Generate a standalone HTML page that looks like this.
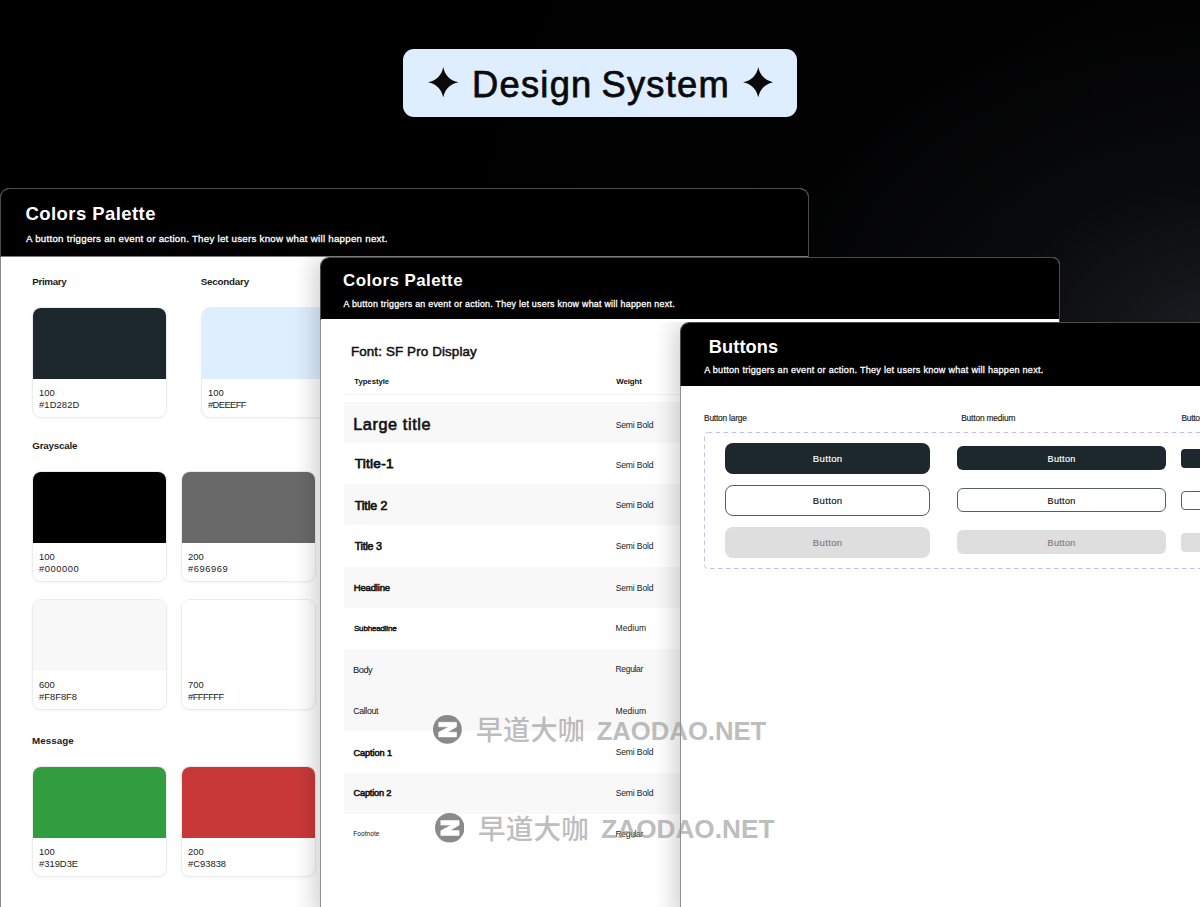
<!DOCTYPE html>
<html lang="en">
<head>
<meta charset="utf-8">
<title>Design System</title>
<style>
*{box-sizing:border-box;margin:0;padding:0}
html,body{width:1200px;height:907px;overflow:hidden}
body{position:relative;background:#000;font-family:"Liberation Sans","Noto Sans CJK SC",sans-serif;color:#111}
.bg{position:absolute;left:0;top:0;width:1200px;height:907px;background:
 radial-gradient(ellipse 480px 330px at 1230px 345px, rgba(27,31,35,1), rgba(12,14,17,.6) 50%, rgba(3,3,4,0) 100%),
 radial-gradient(ellipse 800px 700px at 1250px 300px, rgba(5,5,6,1), rgba(0,0,0,0) 100%),#000}
.abs{position:absolute}
.badge{position:absolute;left:403px;top:49px;width:394px;height:67.5px;border-radius:11px;background:#deeeff}
.badge .t{position:absolute;left:1px;width:100%;top:13.6px;text-align:center;font-size:36.3px;line-height:44px;color:#0a0a0a;letter-spacing:1.25px;word-spacing:-2.4px;-webkit-text-stroke:.75px #0a0a0a}
.badge svg{position:absolute;top:17.7px;width:30.5px;height:30.5px}
.panel{position:absolute;background:#fff;border:1px solid #4a4a4a;border-bottom:none;overflow:hidden}
.hd{position:absolute;left:0;top:0;right:0;background:#000;color:#fff}
#p1{left:0;top:188px;width:809px;height:730px;border-radius:9px 9px 0 0}
#p1 .hd{height:67px;box-shadow:0 1px 0 #7a7a7a}
#p2{left:320px;top:257px;width:740px;height:660px;border-radius:9px 7px 0 0;box-shadow:-6px 0 22px rgba(0,0,0,.18);clip-path:inset(0 0 0 -40px)}
#p2 .hd{height:61px}
#p3{left:680px;top:322px;width:540px;height:600px;border-radius:9px 0 0 0;box-shadow:-6px 0 22px rgba(0,0,0,.18);clip-path:inset(0 0 0 -40px)}
#p3 .hd{height:63px}
.t{position:absolute;white-space:nowrap;line-height:20px;z-index:2}
.sw{position:absolute;width:135px;height:111px;border-radius:9px;background:#fff;border:1px solid #ececec;box-shadow:0 1px 3px rgba(0,0,0,.045);overflow:hidden}
.sw i{position:absolute;left:-1px;top:-1px;width:135px;height:72px;display:block}
.sw u{text-decoration:none}
.sw b{position:absolute;left:6px;top:79px;font-weight:normal;font-size:9.4px;line-height:12.4px;color:#222;white-space:nowrap}
.row{position:absolute;left:23px;width:337px;height:41px}
.row.g{background:#f8f8f8}
.btn{position:absolute;font-size:9.2px;text-align:center;white-space:nowrap}
</style>
</head>
<body>
<div class="bg"></div>

<div class="badge">
  <svg style="left:25px" viewBox="0 0 32 32"><path d="M16 0 C17.6 8.6 23.4 14.4 32 16 C23.4 17.6 17.6 23.4 16 32 C14.4 23.4 8.6 17.6 0 16 C8.6 14.4 14.4 8.6 16 0Z" fill="#0a0a0a"/></svg>
  <div class="t">Design System</div>
  <svg style="left:339.5px" viewBox="0 0 32 32"><path d="M16 0 C17.6 8.6 23.4 14.4 32 16 C23.4 17.6 17.6 23.4 16 32 C14.4 23.4 8.6 17.6 0 16 C8.6 14.4 14.4 8.6 16 0Z" fill="#0a0a0a"/></svg>
</div>

<!-- PANEL 1 -->
<div class="panel" id="p1">
  <div class="hd"></div>
  <span class="t" style="left:24.55px;top:15.00px;font-size:18.5px;letter-spacing:0.423px;color:#fff;font-weight:bold;">Colors Palette</span>
  <span class="t" style="left:25.00px;top:39.50px;font-size:9.7px;letter-spacing:0.275px;color:#fff;-webkit-text-stroke:0.3px #fff;">A button triggers an event or action. They let users know what will happen next.</span>
  <span class="t" style="left:31.25px;top:82.50px;font-size:9.8px;letter-spacing:-0.342px;color:#1a1a1a;font-weight:bold;">Primary</span>
  <span class="t" style="left:199.75px;top:82.50px;font-size:9.8px;letter-spacing:-0.219px;color:#1a1a1a;font-weight:bold;">Secondary</span>
  <span class="t" style="left:31.30px;top:246.70px;font-size:9.8px;letter-spacing:-0.225px;color:#1a1a1a;font-weight:bold;">Grayscale</span>
  <span class="t" style="left:31.05px;top:541.70px;font-size:9.8px;letter-spacing:0.042px;color:#1a1a1a;font-weight:bold;">Message</span>
  <div class="sw" style="left:31px;top:118px"><i style="background:#1d282d"></i><b>100<br><u style="letter-spacing:0.1px">#1D282D</u></b></div>
  <div class="sw" style="left:200px;top:118px"><i style="background:#deeeff"></i><b>100<br><u style="letter-spacing:-0.6px">#DEEEFF</u></b></div>
  <div class="sw" style="left:31px;top:282px"><i style="background:#000"></i><b>100<br><u style="letter-spacing:0.55px">#000000</u></b></div>
  <div class="sw" style="left:180px;top:282px"><i style="background:#696969"></i><b>200<br><u style="letter-spacing:0.55px">#696969</u></b></div>
  <div class="sw" style="left:31px;top:410px"><i style="background:#f8f8f8"></i><b>600<br>#F8F8F8</b></div>
  <div class="sw" style="left:180px;top:410px"><i style="background:#fff"></i><b>700<br><u style="letter-spacing:-0.55px">#FFFFFF</u></b></div>
  <div class="sw" style="left:31px;top:577px"><i style="background:#319d3e"></i><b>100<br>#319D3E</b></div>
  <div class="sw" style="left:180px;top:577px"><i style="background:#c93838"></i><b>200<br>#C93838</b></div>
</div>

<div class="abs" style="left:0;top:257px;width:1px;height:650px;background:#8a8a8a"></div>

<!-- PANEL 2 -->
<div class="panel" id="p2">
  <div class="hd"></div>
  <div class="abs" style="left:23px;top:136px;width:337px;height:1px;background:#f3f3f3"></div>
  <div class="row g" style="top:144px;height:41px"></div>
  <div class="row g" style="top:226px;height:41px"></div>
  <div class="row g" style="top:309px;height:41px"></div>
  <div class="row g" style="top:391px;height:82px"></div>
  <div class="row g" style="top:515px;height:41px"></div>
  <span class="t" style="left:22.05px;top:12.70px;font-size:16.9px;letter-spacing:0.458px;color:#fff;font-weight:bold;">Colors Palette</span>
  <span class="t" style="left:22.50px;top:35.80px;font-size:8.9px;letter-spacing:0.253px;color:#fff;-webkit-text-stroke:0.28px #fff;">A button triggers an event or action. They let users know what will happen next.</span>
  <span class="t" style="left:29.95px;top:84.20px;font-size:13.4px;letter-spacing:0.121px;color:#111;-webkit-text-stroke:0.5px #111;">Font: SF Pro Display</span>
  <span class="t" style="left:33.30px;top:114.20px;font-size:7.7px;letter-spacing:-0.006px;color:#111;font-weight:bold;">Typestyle</span>
  <span class="t" style="left:295.20px;top:114.40px;font-size:7.9px;letter-spacing:-0.080px;color:#111;font-weight:bold;">Weight</span>
  <span class="t" style="left:32.20px;top:155.70px;font-size:16.3px;letter-spacing:0.580px;color:#111;-webkit-text-stroke:0.6px #111;">Large title</span>
  <span class="t" style="left:33.70px;top:196.10px;font-size:13.6px;letter-spacing:0.267px;color:#111;-webkit-text-stroke:0.75px #111;">Title-1</span>
  <span class="t" style="left:33.70px;top:237.70px;font-size:12.4px;letter-spacing:-0.117px;color:#111;-webkit-text-stroke:0.7px #111;">Title 2</span>
  <span class="t" style="left:33.70px;top:277.70px;font-size:10.7px;letter-spacing:-0.250px;color:#111;-webkit-text-stroke:0.62px #111;">Title 3</span>
  <span class="t" style="left:32.70px;top:319.70px;font-size:9.6px;letter-spacing:-0.207px;color:#111;-webkit-text-stroke:0.55px #111;">Headline</span>
  <span class="t" style="left:32.95px;top:360.70px;font-size:8.1px;letter-spacing:-0.225px;color:#111;-webkit-text-stroke:0.42px #111;">Subheadline</span>
  <span class="t" style="left:32.05px;top:402.00px;font-size:9.3px;letter-spacing:-0.500px;color:#111;">Body</span>
  <span class="t" style="left:32.30px;top:443.20px;font-size:8.8px;letter-spacing:-0.375px;color:#111;">Callout</span>
  <span class="t" style="left:32.55px;top:484.50px;font-size:9.2px;letter-spacing:-0.100px;color:#111;-webkit-text-stroke:0.55px #111;">Caption 1</span>
  <span class="t" style="left:32.55px;top:525.20px;font-size:9.2px;letter-spacing:-0.200px;color:#111;-webkit-text-stroke:0.55px #111;">Caption 2</span>
  <span class="t" style="left:32.30px;top:566.20px;font-size:6.5px;letter-spacing:0.057px;color:#111;">Footnote</span>
  <span class="t" style="left:294.70px;top:156.60px;font-size:8.6px;letter-spacing:-0.163px;color:#222;">Semi Bold</span>
  <span class="t" style="left:294.70px;top:196.50px;font-size:8.6px;letter-spacing:-0.163px;color:#222;">Semi Bold</span>
  <span class="t" style="left:294.70px;top:237.00px;font-size:8.6px;letter-spacing:-0.163px;color:#222;">Semi Bold</span>
  <span class="t" style="left:294.70px;top:278.30px;font-size:8.6px;letter-spacing:-0.163px;color:#222;">Semi Bold</span>
  <span class="t" style="left:294.70px;top:319.70px;font-size:8.6px;letter-spacing:-0.163px;color:#222;">Semi Bold</span>
  <span class="t" style="left:294.45px;top:359.70px;font-size:8.6px;letter-spacing:0.050px;color:#222;">Medium</span>
  <span class="t" style="left:294.45px;top:400.70px;font-size:8.6px;letter-spacing:-0.358px;color:#222;">Regular</span>
  <span class="t" style="left:294.45px;top:443.00px;font-size:8.6px;letter-spacing:0.050px;color:#222;">Medium</span>
  <span class="t" style="left:294.70px;top:484.00px;font-size:8.6px;letter-spacing:-0.163px;color:#222;">Semi Bold</span>
  <span class="t" style="left:294.70px;top:525.00px;font-size:8.6px;letter-spacing:-0.163px;color:#222;">Semi Bold</span>
  <span class="t" style="left:294.45px;top:565.70px;font-size:8.6px;letter-spacing:-0.358px;color:#222;">Regular</span>
</div>

<!-- PANEL 3 -->
<div class="panel" id="p3">
  <div class="hd"></div>
  <span class="t" style="left:27.75px;top:13.80px;font-size:18.2px;letter-spacing:0.125px;color:#fff;font-weight:bold;">Buttons</span>
  <span class="t" style="left:23.20px;top:37.00px;font-size:9.1px;letter-spacing:0.257px;color:#fff;-webkit-text-stroke:0.28px #fff;">A button triggers an event or action. They let users know what will happen next.</span>
  <span class="t" style="left:23.00px;top:85.30px;font-size:8.4px;letter-spacing:-0.209px;color:#222;-webkit-text-stroke:0.15px #222;">Button large</span>
  <span class="t" style="left:280.20px;top:85.00px;font-size:8.4px;letter-spacing:-0.167px;color:#222;-webkit-text-stroke:0.15px #222;">Button medium</span>
  <span class="t" style="left:500.50px;top:85.00px;font-size:8.4px;letter-spacing:-0.277px;color:#222;-webkit-text-stroke:0.15px #222;">Button small</span>
  <span class="t" style="left:131.75px;top:125.70px;font-size:9.6px;letter-spacing:0.340px;color:#fff;-webkit-text-stroke:0.15px #fff;">Button</span>
  <span class="t" style="left:131.75px;top:167.70px;font-size:9.6px;letter-spacing:0.340px;color:#111;-webkit-text-stroke:0.15px #111;">Button</span>
  <span class="t" style="left:131.75px;top:209.70px;font-size:9.6px;letter-spacing:0.340px;color:#7d7d7d;-webkit-text-stroke:0.15px #7d7d7d;">Button</span>
  <span class="t" style="left:366.55px;top:125.80px;font-size:9.1px;letter-spacing:0.300px;color:#fff;-webkit-text-stroke:0.15px #fff;">Button</span>
  <span class="t" style="left:366.55px;top:167.80px;font-size:9.1px;letter-spacing:0.300px;color:#111;-webkit-text-stroke:0.15px #111;">Button</span>
  <span class="t" style="left:366.55px;top:209.80px;font-size:9.1px;letter-spacing:0.300px;color:#7d7d7d;-webkit-text-stroke:0.15px #7d7d7d;">Button</span>
  <svg class="abs" style="left:23px;top:109px" width="520" height="138"><rect x=".5" y=".5" width="560" height="136" rx="3" fill="none" stroke="#c4c1ec" stroke-width="1" stroke-dasharray="4.7 3.3"/></svg>

  <div class="btn" style="left:44px;top:120px;width:205px;height:31px;line-height:31px;border-radius:8px;background:#1d282d;color:#fff"></div>
  <div class="btn" style="left:44px;top:162px;width:205px;height:31px;line-height:29px;border-radius:8px;background:#fff;border:1px solid #575e62;color:#111"></div>
  <div class="btn" style="left:44px;top:204px;width:205px;height:31px;line-height:31px;border-radius:8px;background:#dedede;color:#7d7d7d"></div>

  <div class="btn" style="left:276px;top:123px;width:209px;height:24px;line-height:24px;border-radius:6px;background:#1d282d;color:#fff"></div>
  <div class="btn" style="left:276px;top:165px;width:209px;height:24px;line-height:22px;border-radius:6px;background:#fff;border:1px solid #575e62;color:#111"></div>
  <div class="btn" style="left:276px;top:207px;width:209px;height:24px;line-height:24px;border-radius:6px;background:#dedede;color:#7d7d7d"></div>

  <div class="btn" style="left:500px;top:126px;width:100px;height:19px;border-radius:4px;background:#1d282d"></div>
  <div class="btn" style="left:500px;top:168px;width:100px;height:19px;border-radius:4px;background:#fff;border:1px solid #575e62"></div>
  <div class="btn" style="left:500px;top:210px;width:100px;height:19px;border-radius:4px;background:#dedede"></div>
</div>

<div class="abs" style="left:320px;top:320px;width:1px;height:590px;background:#8f8f8f"></div>
<div class="abs" style="left:680px;top:386px;width:1px;height:530px;background:#8f8f8f"></div>

<!-- WATERMARKS -->
<svg class="abs" style="left:433.2px;top:715px;z-index:3" width="28.8" height="28.8" viewBox="0 0 30 30"><circle cx="15" cy="15" r="15" fill="rgba(112,112,112,.82)"/><path d="M5.9 7.6H24.5V12.3L15.1 17.9H24.5V22.8H5.9V18L16.7 12.3H5.9Z" fill="#fff" stroke="#fff" stroke-width=".6" stroke-linejoin="round"/></svg>
<svg class="abs" style="left:434.7px;top:813.3px;z-index:3" width="29.5" height="29.5" viewBox="0 0 30 30"><circle cx="15" cy="15" r="15" fill="rgba(112,112,112,.82)"/><path d="M5.9 7.6H24.5V12.3L15.1 17.9H24.5V22.8H5.9V18L16.7 12.3H5.9Z" fill="#fff" stroke="#fff" stroke-width=".6" stroke-linejoin="round"/></svg>
<span class="t" style="left:475.75px;top:721.35px;font-size:27px;letter-spacing:0.333px;color:rgba(146,146,146,.62);font-weight:500;">早道大咖</span>
  <span class="t" style="left:596.65px;top:721.25px;font-size:25.7px;letter-spacing:-0.017px;color:rgba(146,146,146,.62);font-weight:bold;">ZAODAO.NET</span>
  <span class="t" style="left:477.95px;top:819.95px;font-size:27.5px;letter-spacing:0.267px;color:rgba(146,146,146,.62);font-weight:500;">早道大咖</span>
  <span class="t" style="left:601.25px;top:819.45px;font-size:26.2px;letter-spacing:0.000px;color:rgba(146,146,146,.62);font-weight:bold;">ZAODAO.NET</span>
</body>
</html>
